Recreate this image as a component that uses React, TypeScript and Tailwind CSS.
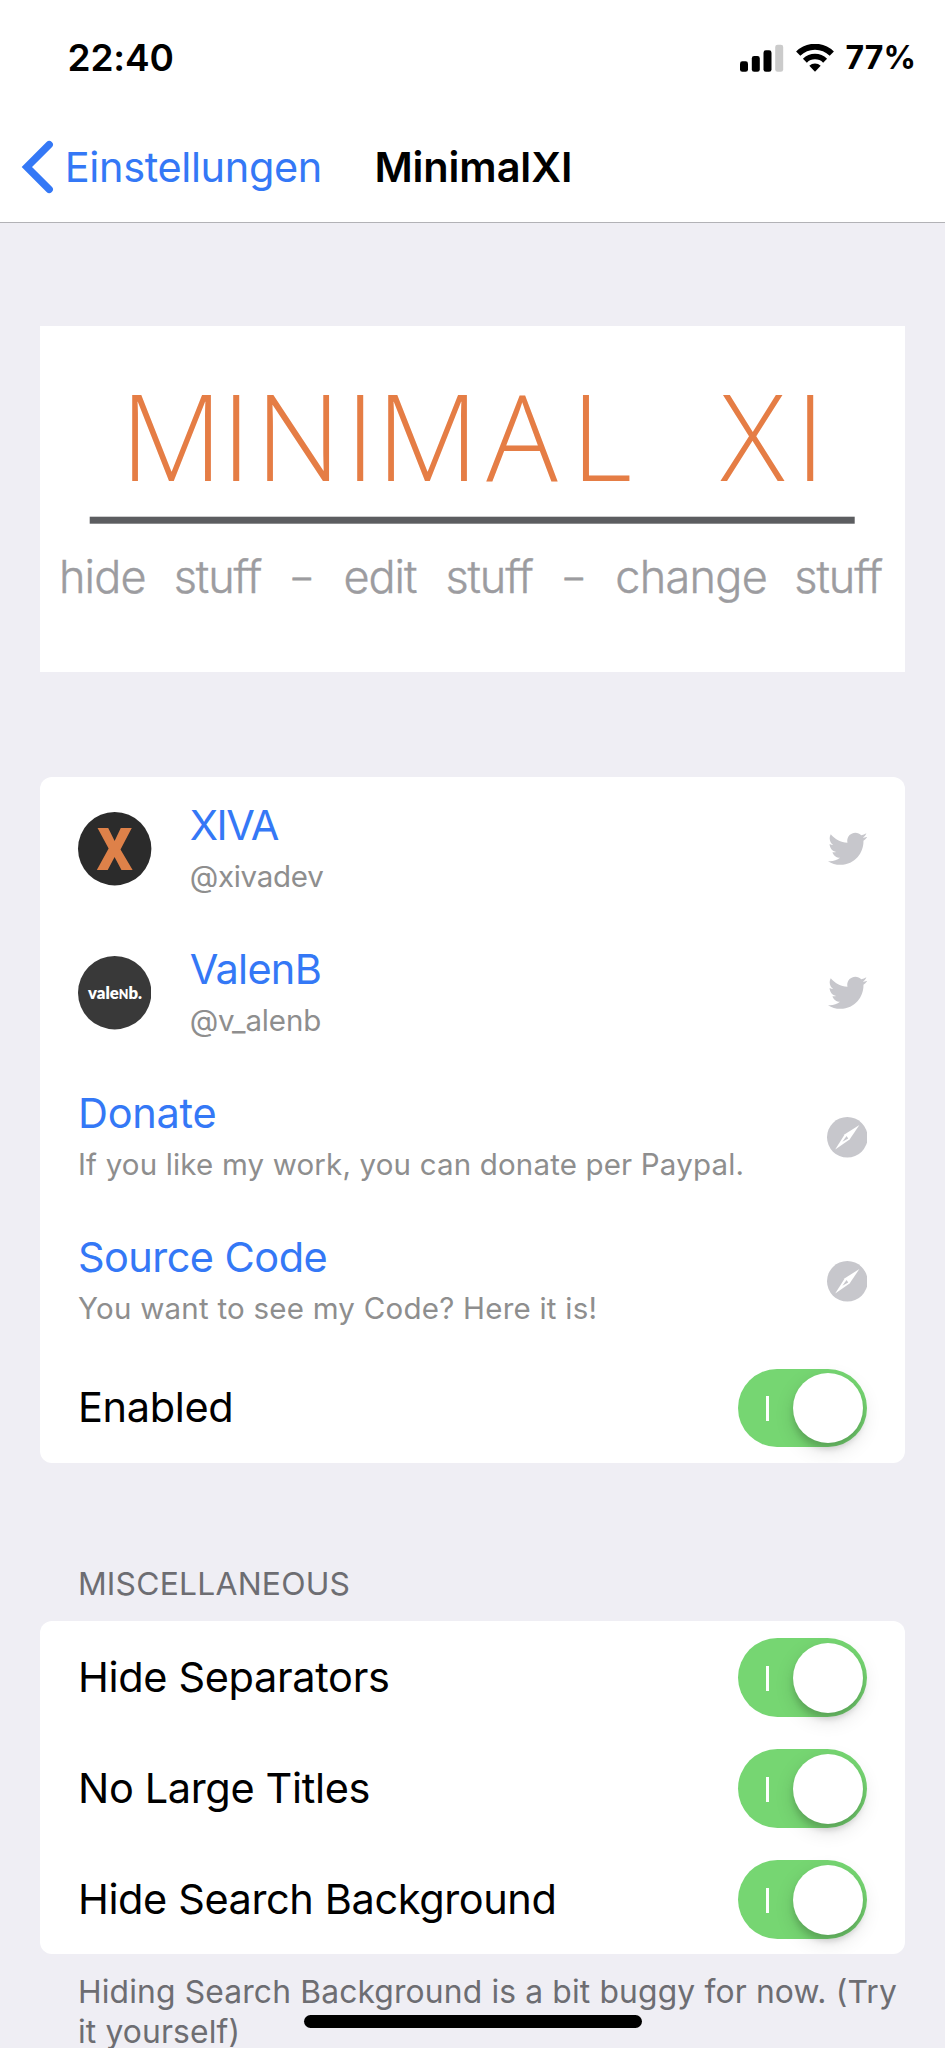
import React from "react";
import { FaTwitter } from "react-icons/fa";

function StatusBar() {
  return (
    <div className="flex h-[142.6px] items-start pt-[34.2px] leading-[48px]">
      <div className="ml-[67.5px] text-[37px] font-semibold tracking-[-0.136px]">22:40</div>
      <div className="ml-auto mr-[29px] flex">
        <svg width="94" height="28" viewBox="0 0 94 28" className="mr-[11.5px] mt-[9.8px]">
          <rect x="0" y="17.3" width="8" height="10.5" rx="2.4" />
          <rect x="11.8" y="12" width="8" height="15.8" rx="2.4" />
          <rect x="23.5" y="6.3" width="8" height="21.5" rx="2.4" />
          <rect x="35.2" y="0.7" width="8" height="27.1" rx="2.4" fill="#cbcbcb" />
          <g fill="none" stroke="#000">
            <path d="M58.2 9.6 A24 24 0 0 1 91.8 9.6" strokeWidth="6" />
            <path d="M64.9 16.7 A14.4 14.4 0 0 1 85.1 16.7" strokeWidth="5.6" />
          </g>
          <path d="M69.3 21.8 A8.3 8.3 0 0 1 80.7 21.8 L75 27.8 Z" />
        </svg>
        <div className="text-[32px] font-bold tracking-[0.08px]">77%</div>
      </div>
    </div>
  );
}

function NavBar() {
  return (
    <div className="flex h-[79.4px] items-start text-[41.5px] leading-[48px]">
      <svg width="34" height="56" viewBox="0 0 34 56" className="ml-[21px] mt-[-4px]">
        <path d="M28.2 5.7 L5.9 28 L28.2 50.3" fill="none" stroke="#3478f6" strokeWidth="7.4" strokeLinecap="round" />
      </svg>
      <div className="ml-[9.8px] w-[309.6px] tracking-[-0.383px] text-[#3478f6]">Einstellungen</div>
      <div className="font-semibold tracking-[-0.102px]">MinimalXI</div>
    </div>
  );
}

function Banner() {
  return (
    <svg width="864.5" height="346" viewBox="0 0 864.5 346" className="block bg-white">
      <text
        x="131.5 196.3 258.2 320.2 387.5 482 561.5 640 712.5 770.3"
        y="155"
        textAnchor="middle"
        className="fill-[#e57d45] font-['Open_Sans'] text-[119px] font-light"
      >
        MINIMAL XI
      </text>
      <rect x="49.7" y="190.7" width="765" height="7" fill="#5c5d60" />
      <g className="fill-[#9c9ca0] stroke-[#9c9ca0] stroke-[0.4px] font-['Inter'] text-[45px] font-light">
        <text x="18.9" y="267.3" letterSpacing="-0.8">hide</text>
        <text x="133.7" y="267.3" letterSpacing="-1.1">stuff</text>
        <text x="252.7" y="264.3" className="stroke-[0.8px] text-[36px]">–</text>
        <text x="303.4" y="267.3" letterSpacing="-1">edit</text>
        <text x="405.4" y="267.3" letterSpacing="-1.1">stuff</text>
        <text x="524.7" y="264.3" className="stroke-[0.8px] text-[36px]">–</text>
        <text x="575.2" y="267.3" letterSpacing="-0.7">change</text>
        <text x="754.2" y="267.3" letterSpacing="-1">stuff</text>
      </g>
    </svg>
  );
}

function XivaAvatar() {
  return (
    <svg width="73.4" height="73.4" viewBox="0 0 73.4 73.4" className="overflow-visible">
      <circle cx="36.7" cy="36.7" r="36.7" fill="#2b2b2b" />
      <text x="36.7" y="57.8" textAnchor="middle" className="fill-[#de8149] font-['Open_Sans'] text-[58px] font-extrabold" textLength="36" lengthAdjust="spacingAndGlyphs">
        X
      </text>
    </svg>
  );
}

function ValenbAvatar() {
  return (
    <svg width="73.4" height="73.4" viewBox="0 0 73.4 73.4">
      <circle cx="36.7" cy="36.7" r="36.7" fill="#393939" />
      <text x="10" y="43.3" className="fill-white font-['Lato'] text-[17.5px] font-extrabold" textLength="54" lengthAdjust="spacingAndGlyphs">
        vale<tspan fontSize="13">N</tspan>b.
      </text>
    </svg>
  );
}

function Compass() {
  return (
    <svg width="40.6" height="40.6" viewBox="0 0 40.6 40.6" className="mt-[1.2px]">
      <circle cx="20.3" cy="20.3" r="20.3" fill="#c7c7cc" />
      <path d="M32.4 8 L22.6 22.4 L8.2 32.4 L17.8 17.2 Z" fill="#fff" />
      <path d="M19.6 18.9 L21.2 21.4 L15.4 24.8 Z" fill="#c7c7cc" />
    </svg>
  );
}

const bird = <FaTwitter size={39.5} color="#c7c7cc" />;

type LinkProps = {
  title: string;
  titleClass: string;
  sub: string;
  subClass: string;
  icon: React.ReactNode;
  avatar?: React.ReactNode;
};

function LinkRow({ title, titleClass, sub, subClass, icon, avatar }: LinkProps) {
  return (
    <div className="flex h-36 items-center pl-[37.6px] pr-[37.6px]">
      {avatar && <div className="mr-[38.3px] w-[73.4px]">{avatar}</div>}
      <div className="h-[95.4px] flex-1 whitespace-nowrap">
        <div className={"text-[41.5px] leading-[48px] text-[#3478f6] " + titleClass}>{title}</div>
        <div className={"mt-[8.4px] text-[29.5px] leading-[36px] text-[#8e8e8e] " + subClass}>{sub}</div>
      </div>
      {icon}
    </div>
  );
}

function Toggle() {
  return (
    <div className="flex h-[78.4px] w-[129px] items-center rounded-full bg-[#76d672] pl-7">
      <div className="mt-[2px] h-[25px] w-[3px] bg-white" />
      <div className="ml-[23.5px] size-[70px] rounded-full bg-white shadow-[0_7px_20px_rgba(0,0,0,0.12),0_6px_6px_rgba(0,0,0,0.15)]" />
    </div>
  );
}

function SwitchRow({ label, className }: { label: string; className: string }) {
  return (
    <div className={"flex items-center justify-between pl-[37.6px] pr-[37.6px] text-[41.5px] leading-[48px] " + className}>
      <span className="mt-[-2px]">{label}</span>
      <Toggle />
    </div>
  );
}

export default function App() {
  return (
    <div className="relative h-[2048px] w-[945px] overflow-hidden bg-[#efeef4] font-['Inter',sans-serif] text-black">
      <header className="h-[223px] border-b border-[#b2b2b6] bg-white">
        <StatusBar />
        <NavBar />
      </header>
      <main className="ml-[40.4px] w-[864.5px] pt-[103px]">
        <Banner />
        <section className="mt-[104.9px] overflow-hidden rounded-[12px] bg-white">
          <LinkRow title="XIVA" titleClass="tracking-[-1.416px]" sub="@xivadev" subClass="tracking-[-0.275px]" icon={bird} avatar={<XivaAvatar />} />
          <LinkRow title="ValenB" titleClass="tracking-[-0.719px]" sub="@v_alenb" subClass="tracking-[-0.147px]" icon={bird} avatar={<ValenbAvatar />} />
          <LinkRow title="Donate" titleClass="tracking-[-0.265px]" sub="If you like my work, you can donate per Paypal." subClass="tracking-[0.168px]" icon={<Compass />} />
          <LinkRow title="Source Code" titleClass="tracking-[-0.567px]" sub="You want to see my Code? Here it is!" subClass="tracking-[0.24px]" icon={<Compass />} />
          <SwitchRow label="Enabled" className="h-[110px] tracking-[-0.354px]" />
        </section>
        <h2 className="mt-[101.6px] pl-[37.5px] text-[31.8px] leading-[40px] tracking-[0.23px] text-[#6d6d72]">MISCELLANEOUS</h2>
        <section className="mt-[16.8px] overflow-hidden rounded-[12px] bg-white">
          <SwitchRow label="Hide Separators" className="h-[111px] pt-[1.6px] tracking-[-0.34px]" />
          <SwitchRow label="No Large Titles" className="h-[111px] pt-[1.6px] tracking-[-0.357px]" />
          <SwitchRow label="Hide Search Background" className="h-[111px] pt-[1.6px] tracking-[-0.4px]" />
        </section>
        <p className="mt-[17.5px] whitespace-nowrap pl-[37.5px] text-[31.8px] leading-[40px] tracking-[0.15px] text-[#6d6d72]">
          Hiding Search Background is a bit buggy for now. (Try
          <br />
          it yourself)
        </p>
      </main>
      <div className="absolute left-[304px] top-[2015px] h-[12.7px] w-[338px] rounded-full bg-black" />
    </div>
  );
}
